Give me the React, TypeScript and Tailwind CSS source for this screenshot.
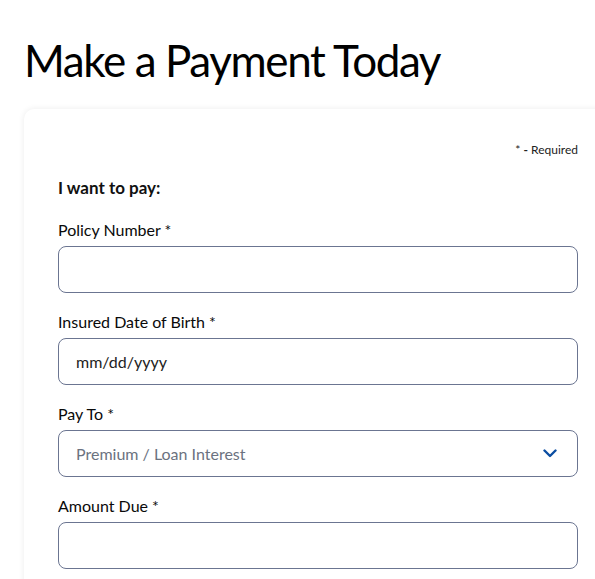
import React from "react";

const Field = ({ label, children }: { label: string; children: React.ReactNode }) => (
  <div className="flex flex-col">
    <label className="mb-[6px] text-[16px] leading-[20px] text-[#0a0a0a]">{label}</label>
    {children}
  </div>
);

const boxCls =
  "flex h-[47px] w-full items-center rounded-[8px] border border-[#6b7591] bg-white px-[17px] text-[16px]";

export default function App() {
  return (
    <div className="h-[579px] w-[595px] overflow-hidden bg-white" style={{ fontFamily: "Lato, 'Open Sans', sans-serif" }}>
      <h1 className="ml-[24px] pt-[33px] text-[44px] leading-[54px] tracking-[-1.4px] text-black" style={{ fontFamily: "Lato, sans-serif", fontWeight: 400 }}>
        Make a Payment Today
      </h1>

      <div className="ml-[24px] mt-[22px] w-[590px] rounded-tl-[10px] bg-white pb-6 pl-[34px] pr-[12px] pt-[33px] shadow-[0_0_6px_rgba(0,0,0,0.08)]">
        <div className="w-[520px]">
          <p className="text-right text-[12px] leading-[16px] text-[#222]">
            * <span className="font-bold">-</span> Required
          </p>
          <h2 className="mt-[20px] text-[17px] font-bold leading-[20px] text-[#111]">I want to pay:</h2>

          <div className="mt-[22px] flex flex-col gap-[19px]">
            <Field label="Policy Number *">
              <div className={boxCls} />
            </Field>
            <Field label="Insured Date of Birth *">
              <div className={boxCls + " text-[#222]"}>mm/dd/yyyy</div>
            </Field>
            <Field label="Pay To *">
              <div className={boxCls + " justify-between pr-[20px] text-[#6b7280]"}>
                <span>Premium / Loan Interest</span>
                <svg width="14" height="9" viewBox="0 0 14 9" fill="none">
                  <path d="M1.5 1.5 7 7l5.5-5.5" stroke="#0b4ea2" strokeWidth="2.4" strokeLinecap="round" strokeLinejoin="round" />
                </svg>
              </div>
            </Field>
            <Field label="Amount Due *">
              <div className={boxCls} />
            </Field>
          </div>
        </div>
      </div>
    </div>
  );
}
